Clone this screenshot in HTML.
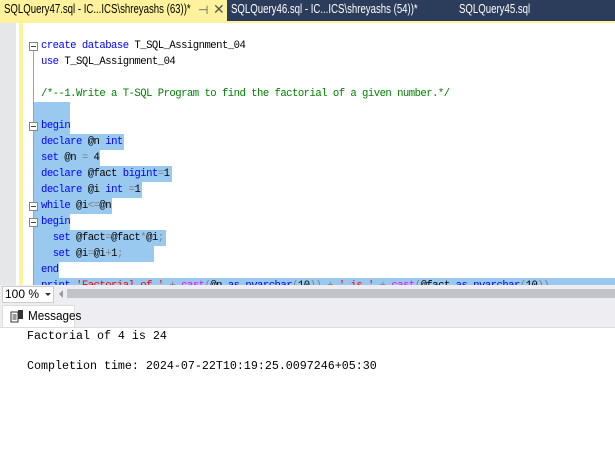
<!DOCTYPE html>
<html><head><style>
body{margin:0;width:615px;height:459px;overflow:hidden;background:#fff;position:relative;font-family:"Liberation Sans",sans-serif}
.abs{position:absolute}
.code{font-family:"Liberation Mono",monospace;font-size:10.6px;letter-spacing:-0.52px;white-space:pre;line-height:16px;height:16px}
.k{color:#0000ff}.g{color:#008000}.gr{color:#808080}.r{color:#ff0000}.m{color:#ff00ff}.b{color:#000}
.sel{background:#99c9ef}
.fold{position:absolute;left:29px;width:7px;height:7px;border:1px solid #888;background:#fff}
.fold:after{content:"";position:absolute;left:1px;top:3px;width:5px;height:1px;background:#444}
.tt{position:absolute;top:2px;font-size:12.5px;white-space:nowrap;transform:scaleX(0.77);transform-origin:0 0}
</style></head><body>
<div class="abs" style="left:0;top:0;width:615px;height:21px;background:#2c3d5b"></div>
<div class="abs" style="left:0;top:0;width:227px;height:21px;background:#fff29d"></div>
<div class="abs" style="left:0;top:21px;width:615px;height:2px;background:#fff29d"></div>
<div class="tt" style="left:4px;color:#000">SQLQuery47.sql - IC...ICS\shreyashs (63))*</div>
<div class="abs" style="left:198px;top:3px;font-size:12px;color:#555">⊣</div>
<div class="abs" style="left:213px;top:1px;font-size:14px;color:#555">✕</div>
<div class="tt" style="left:231px;color:#fff">SQLQuery46.sql - IC...ICS\shreyashs (54))*</div>
<div class="tt" style="left:459px;color:#fff">SQLQuery45.sql</div>
<div class="abs" style="left:0;top:23px;width:16px;height:262px;background:#e6e7e8"></div>
<div class="abs" style="left:19px;top:23px;width:4px;height:262px;background:#fff29d"></div>
<div class="abs" style="left:33px;top:50px;width:1px;height:235px;background:#a0a0a0"></div>
<div class="abs sel" style="left:34px;top:102px;width:36px;height:16px"></div>
<div class="abs sel" style="left:34px;top:118px;width:36px;height:16px"></div>
<div class="abs sel" style="left:34px;top:134px;width:90px;height:16px"></div>
<div class="abs sel" style="left:34px;top:150px;width:66px;height:16px"></div>
<div class="abs sel" style="left:34px;top:166px;width:138px;height:16px"></div>
<div class="abs sel" style="left:34px;top:182px;width:108px;height:16px"></div>
<div class="abs sel" style="left:34px;top:198px;width:78px;height:16px"></div>
<div class="abs sel" style="left:34px;top:214px;width:36px;height:16px"></div>
<div class="abs sel" style="left:34px;top:230px;width:132px;height:16px"></div>
<div class="abs sel" style="left:34px;top:246px;width:120px;height:16px"></div>
<div class="abs sel" style="left:34px;top:262px;width:25px;height:16px"></div>
<div class="abs sel" style="left:34px;top:278px;width:581px;height:7px"></div>
<div class="fold" style="top:42px"></div>
<div class="fold" style="top:122px"></div>
<div class="fold" style="top:202px"></div>
<div class="fold" style="top:218px"></div>
<div class="abs" style="left:0;top:38px;width:615px;height:247px;overflow:hidden">
<div class="code" style="padding-left:41px"><span class="k">create database</span> T_SQL_Assignment_04</div>
<div class="code" style="padding-left:41px"><span class="k">use</span> T_SQL_Assignment_04</div>
<div class="code"> </div>
<div class="code g" style="padding-left:41px">/*--1.Write a T-SQL Program to find the factorial of a given number.*/</div>
<div class="code"> </div>
<div class="code" style="padding-left:41px"><span class="k">begin</span></div>
<div class="code" style="padding-left:41px"><span class="k">declare</span> @n <span class="k">int</span></div>
<div class="code" style="padding-left:41px"><span class="k">set</span> @n <span class="gr">=</span> 4</div>
<div class="code" style="padding-left:41px"><span class="k">declare</span> @fact <span class="k">bigint</span><span class="gr">=</span>1</div>
<div class="code" style="padding-left:41px"><span class="k">declare</span> @i <span class="k">int</span> <span class="gr">=</span>1</div>
<div class="code" style="padding-left:41px"><span class="k">while</span> @i<span class="gr">&lt;=</span>@n</div>
<div class="code" style="padding-left:41px"><span class="k">begin</span></div>
<div class="code" style="padding-left:41px">  <span class="k">set</span> @fact<span class="gr">=</span>@fact<span class="gr">*</span>@i<span class="gr">;</span></div>
<div class="code" style="padding-left:41px">  <span class="k">set</span> @i<span class="gr">=</span>@i<span class="gr">+</span>1<span class="gr">;</span></div>
<div class="code" style="padding-left:41px"><span class="k">end</span></div>
<div class="code" style="padding-left:41px"><span class="k">print</span> <span class="r">'Factorial of '</span> <span class="gr">+</span> <span class="m">cast</span><span class="gr">(</span>@n <span class="k">as</span> <span class="k">nvarchar</span><span class="gr">(</span>10<span class="gr">))</span> <span class="gr">+</span> <span class="r">' is '</span> <span class="gr">+</span> <span class="m">cast</span><span class="gr">(</span>@fact <span class="k">as</span> <span class="k">nvarchar</span><span class="gr">(</span>10<span class="gr">))</span></div>
</div>
<div class="abs" style="left:0;top:285px;width:615px;height:42px;background:#eeeef2"></div>
<div class="abs" style="left:2px;top:286px;width:50px;height:15px;background:#fff;border:1px solid #ccc"></div>
<div class="abs" style="left:5px;top:287px;font-size:12px;color:#000">100 %</div>
<div class="abs" style="left:45px;top:293px;width:0;height:0;border-left:3px solid transparent;border-right:3px solid transparent;border-top:3px solid #333"></div>
<div class="abs" style="left:59px;top:290px;width:0;height:0;border-top:4px solid transparent;border-bottom:4px solid transparent;border-right:4px solid #999"></div>
<div class="abs" style="left:67px;top:289px;width:548px;height:9px;background:#c2c3c9"></div>
<div class="abs" style="left:2px;top:305px;width:71px;height:22px;background:#fff;border:1px solid #ddd;border-bottom:none"></div>
<svg class="abs" style="left:10px;top:309px" width="14" height="14" viewBox="0 0 14 14"><rect x="1" y="3" width="7" height="10" fill="#fff" stroke="#333"/><path d="M2.5 6h4M2.5 8h4M2.5 10h4" stroke="#333"/><rect x="8" y="1" width="5" height="9" fill="#333"/></svg>
<div class="abs" style="left:28px;top:308px;font-size:13px;color:#000;transform:scaleX(0.9);transform-origin:0 0">Messages</div>
<div class="abs" style="left:0;top:327px;width:615px;height:1px;background:#ddd"></div>
<div class="abs" style="left:27px;top:329px;font-family:'Liberation Mono',monospace;font-size:11.67px;white-space:pre;color:#000">Factorial of 4 is 24</div>
<div class="abs" style="left:27px;top:359px;font-family:'Liberation Mono',monospace;font-size:11.67px;white-space:pre;color:#000">Completion time: 2024-07-22T10:19:25.0097246+05:30</div>
</body></html>
